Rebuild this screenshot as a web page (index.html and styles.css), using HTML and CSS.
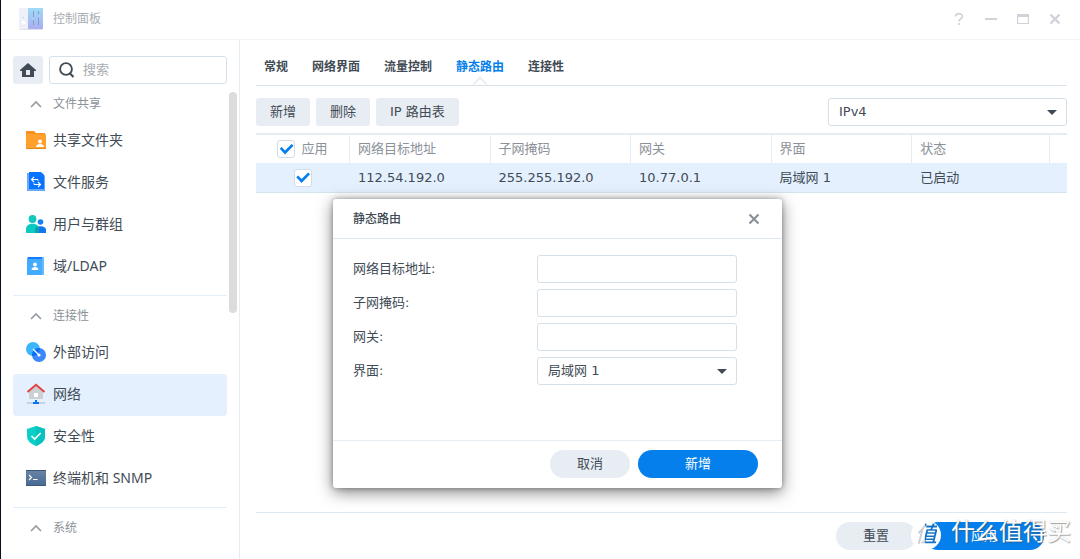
FILE: index.html
```html
<!DOCTYPE html>
<html lang="zh-CN">
<head>
<meta charset="utf-8">
<title>控制面板</title>
<link rel="stylesheet" href="styles.css">
</head>
<body>
<div class="window">
  <header class="titlebar">
    <svg class="app-icon" width="24" height="22" viewBox="0 0 24 22">
      <defs><linearGradient id="panel" x1="0" y1="0" x2="0" y2="1"><stop offset="0" stop-color="#9fdaf6"/><stop offset="1" stop-color="#a9aff0"/></linearGradient></defs>
      <rect x="0" y="1" width="24" height="21" rx="2" fill="#dfe0e6"/>
      <rect width="11" height="21" rx="1" fill="#eef0fa"/>
      <rect x="9" width="15" height="21" rx="1" fill="url(#panel)"/>
      <circle cx="4.500" cy="14.500" r="2.800" fill="#fff" stroke="#dcdfea" stroke-width=".6"/>
      <circle cx="4.500" cy="9.500" r=".6" fill="#b5bac8"/>
      <path d="M14.500 3v14M19.500 3v14" stroke="#7f9fca" stroke-width="1"/>
      <circle cx="14.500" cy="10.500" r="1.500" fill="#a9d0fa"/><circle cx="19.500" cy="8" r="1.500" fill="#a9d0fa"/>
    </svg>
    <h1 class="title">控制面板</h1>
    <div class="window-tools">
      <button class="tool" aria-label="帮助"><svg width="12" height="14" viewBox="0 0 12 14"><path d="M2.500 4.500C2.500 .8 9.500 .8 9.500 4.300C9.500 6.500 6 6.600 6 9.500M6 11v2" fill="none" stroke="currentColor" stroke-width="1.700"/></svg></button>
      <button class="tool" aria-label="最小化"><svg width="12" height="12" viewBox="0 0 12 12"><path d="M0 6h12" stroke="currentColor" stroke-width="2"/></svg></button>
      <button class="tool" aria-label="最大化"><svg width="12" height="12" viewBox="0 0 12 12"><path d="M.6 1.500h10.800v9H.6z" fill="none" stroke="currentColor" stroke-width="1.200"/><path d="M0 1h12v3H0z" fill="currentColor"/></svg></button>
      <button class="tool" aria-label="关闭"><svg width="12" height="12" viewBox="0 0 12 12"><path d="M1.500 1.500l9 9M10.500 1.500l-9 9" stroke="currentColor" stroke-width="2.400"/></svg></button>
    </div>
  </header>

  <nav class="sidebar">
    <div class="search-row">
      <button class="home" aria-label="主页"><svg width="16" height="14" viewBox="0 0 16 14"><path d="M8 0L0 7v1h2v6h12V8h2V7z" fill="#414b55"/><path d="M6 7h4v5H6z" fill="#e8edf3"/></svg></button>
      <label class="search">
        <svg width="16" height="16" viewBox="0 0 16 16"><circle cx="7" cy="7" r="5.900" fill="none" stroke="#414b55" stroke-width="1.900"/><path d="M10.500 11l4 4" stroke="#414b55" stroke-width="2.200"/></svg>
        <input type="search" placeholder="搜索" aria-label="搜索">
      </label>
    </div>

    <section class="group">
      <h2 class="group-title"><svg width="12" height="8" viewBox="0 0 12 8"><path d="M1 7l5-5 5 5" fill="none" stroke="#969da5" stroke-width="1.700"/></svg>文件共享</h2>
      <a class="item" href="#"><svg width="20" height="20" viewBox="0 0 20 20"><path d="M0 1h8l2 2h9v5H0z" fill="#f6901e"/><rect y="4" width="20" height="15" rx="1" fill="#ffa02c"/><path d="M0 18h20v1H0z" fill="#e98a18"/><circle cx="14" cy="11.500" r="2" fill="#fff"/><path d="M10 17c0-4 8-4 8 0z" fill="#fff"/></svg>共享文件夹</a>
      <a class="item" href="#"><svg width="20" height="20" viewBox="0 0 20 20"><path d="M1 1h15l3 3v15H1z" fill="#69a9fa"/><path d="M3 0h12l3 3v14H3z" fill="#0874ff"/><path d="M12 7.500H5.500M8 5L5.500 7.500 8 10M8 12.500h6.500M12 10l2.500 2.500L12 15M12 7.500v1.200M8 12.500v-1.200" fill="none" stroke="#fff" stroke-width="1.100"/></svg>文件服务</a>
      <a class="item" href="#"><svg width="20" height="20" viewBox="0 0 20 20"><circle cx="6.500" cy="5" r="3.900" fill="#12c8bd"/><circle cx="14.500" cy="8" r="2.800" fill="#1681f5"/><path d="M9 19v-3c0-5 11-5 11 0v3z" fill="#1276ef"/><path d="M0 19v-4c0-7 13-7 13 0v4z" fill="#0ccac2"/><path d="M9 19v-4c0-1 1-2 3-3 1 2 1 3 1 7z" fill="#08a4ae"/></svg>用户与群组</a>
      <a class="item" href="#"><svg width="20" height="20" viewBox="0 0 20 20"><rect x="1" y="1" width="17" height="18" rx="1" fill="#65b8ff"/><path d="M2 1h14v2H2z" fill="#177cff"/><path d="M1 3h15v16H1z" fill="#43acff"/><circle cx="9" cy="8.500" r="1.900" fill="#fff"/><path d="M5.500 14c0-4 7-4 7 0z" fill="#fff"/></svg>域/LDAP</a>
    </section>

    <section class="group">
      <h2 class="group-title"><svg width="12" height="8" viewBox="0 0 12 8"><path d="M1 7l5-5 5 5" fill="none" stroke="#969da5" stroke-width="1.700"/></svg>连接性</h2>
      <a class="item" href="#"><svg width="20" height="20" viewBox="0 0 20 20"><circle cx="7" cy="7" r="7" fill="#3fb5fb"/><circle cx="13" cy="13" r="7" fill="#3b88fb"/><path d="M6.050 13.900A7 7 0 0 1 13.900 6.050A7 7 0 0 1 6.050 13.900z" fill="#0870f5"/><path d="M7 7l5 5" stroke="#fff" stroke-width="1.200"/><circle cx="13" cy="13" r="1.600" fill="#fff"/></svg>外部访问</a>
      <a class="item selected" href="#" aria-current="page"><svg width="20" height="22" viewBox="0 0 20 22"><path d="M3 8l7-6 7 6v8H3z" fill="#cdd0d3"/><path d="M1.500 9L10 1.800 18.500 9" fill="none" stroke="#e14444" stroke-width="2"/><rect x="8" y="10" width="4" height="4" fill="#fff"/><path d="M1 20h6M13 20h6" stroke="#bfc7ce" stroke-width="1.500"/><path d="M7 19h2v-2h2v2h2v2H7z" fill="#0874f5"/></svg>网络</a>
      <a class="item" href="#"><svg width="20" height="20" viewBox="0 0 20 20"><path d="M10 0l9 3v7c0 5-4 8-9 10-5-2-9-5-9-10V3z" fill="#0bcfc7"/><path d="M10 0l9 3v7c0 5-4 8-9 10z" fill="#08c2c0"/><path d="M5.500 10l3.200 3 6-6" fill="none" stroke="#fff" stroke-width="1.700"/></svg>安全性</a>
      <a class="item" href="#"><svg width="20" height="16" viewBox="0 0 20 16"><defs><linearGradient id="term" x1="0" y1="0" x2="0" y2="1"><stop offset="0" stop-color="#6783a3"/><stop offset="1" stop-color="#486b94"/></linearGradient></defs><rect width="20" height="16" fill="#3c5878"/><rect width="20" height="14" y="1" fill="url(#term)"/><path d="M3 5l2.500 2.500L3 10M7 9.500h4.500" fill="none" stroke="#fff" stroke-width="1.200"/></svg>终端机和 SNMP</a>
    </section>

    <section class="group">
      <h2 class="group-title"><svg width="12" height="8" viewBox="0 0 12 8"><path d="M1 7l5-5 5 5" fill="none" stroke="#969da5" stroke-width="1.700"/></svg>系统</h2>
    </section>
    <div class="scrollbar"></div>
  </nav>

  <main class="content">
    <nav class="tabs">
      <a class="tab" href="#">常规</a>
      <a class="tab" href="#">网络界面</a>
      <a class="tab" href="#">流量控制</a>
      <a class="tab active" href="#" aria-current="page">静态路由</a>
      <a class="tab" href="#">连接性</a>
    </nav>
    <div class="toolbar">
      <button class="btn">新增</button>
      <button class="btn">删除</button>
      <button class="btn">IP 路由表</button>
      <div class="select-box version"><select aria-label="IP 版本"><option>IPv4</option></select></div>
    </div>
    <table class="routes">
      <colgroup><col class="col-apply"><col class="col-data"><col class="col-data"><col class="col-data"><col class="col-data"><col class="col-state"><col></colgroup>
      <thead>
        <tr><th><label class="apply"><input class="check" type="checkbox" checked>应用</label></th><th>网络目标地址</th><th>子网掩码</th><th>网关</th><th>界面</th><th>状态</th><th></th></tr>
      </thead>
      <tbody>
        <tr><td><label class="apply"><input class="check" type="checkbox" checked aria-label="应用此路由"></label></td><td>112.54.192.0</td><td>255.255.192.0</td><td>10.77.0.1</td><td>局域网 1</td><td>已启动</td><td></td></tr>
      </tbody>
    </table>
    <footer class="actions">
      <button class="pill">重置</button>
      <button class="pill primary">应用</button>
    </footer>
  </main>

  <form class="dialog" role="dialog" aria-labelledby="dialog-title">
    <header class="dialog-head">
      <h2 id="dialog-title">静态路由</h2>
      <button type="button" class="close" aria-label="关闭"><svg width="12" height="12" viewBox="0 0 12 12"><path d="M1.500 1.500l9 9M10.500 1.500l-9 9" stroke="currentColor" stroke-width="2.200"/></svg></button>
    </header>
    <div class="fields">
      <label for="dest">网络目标地址:</label><input id="dest" type="text">
      <label for="mask">子网掩码:</label><input id="mask" type="text">
      <label for="gateway">网关:</label><input id="gateway" type="text">
      <label for="iface">界面:</label><div class="select-box"><select id="iface"><option>局域网 1</option></select></div>
    </div>
    <footer class="dialog-foot">
      <button type="button" class="pill">取消</button>
      <button type="button" class="pill primary">新增</button>
    </footer>
  </form>

  <div class="watermark"><span class="badge"><span class="badge-char">值</span></span><span class="brand">什么值得买</span></div>
</div>
</body>
</html>
```
FILE: styles.css
```css
* { box-sizing: border-box; }
body {
  margin: 0;
  font: 13px/20px "DejaVu Sans", "Noto Sans CJK SC", sans-serif;
  color: #414b55;
  background: #fff;
}
button, input, select { font: inherit; color: inherit; }
button { border: 0; padding: 0; cursor: pointer; }
a { color: inherit; text-decoration: none; }
h1, h2 { margin: 0; }
svg { display: block; flex: none; }

.window {
  position: relative;
  height: 100vh;
  display: grid;
  grid-template: 40px minmax(0, 1fr) / 239px minmax(0, 1fr);
  border-left: 1px solid #06101f;
  overflow: hidden;
}

.titlebar {
  grid-column: 1 / -1;
  display: flex;
  align-items: center;
  padding: 0 19px 2px 18px;
  border-bottom: 1px solid #f1f3f5;
}
.title { margin-left: 10px; font-size: 12px; font-weight: 400; color: #a9adb2; }
.window-tools { margin-left: auto; display: flex; gap: 20px; color: #d0d3d9; }
.tool { display: flex; background: none; color: inherit; align-items: center; }

.sidebar {
  position: relative;
  padding: 16px 12px 0;
  border-right: 1px solid #e8ecf1;
  overflow: hidden;
}
.search-row { display: flex; gap: 6px; }
.home {
  width: 30px;
  height: 28px;
  display: grid;
  place-items: center;
  border-radius: 3px;
  background: #e8edf3;
}
.search {
  flex: 1;
  display: flex;
  align-items: center;
  gap: 8px;
  height: 28px;
  padding: 0 9px;
  border: 1px solid #d5e0ea;
  border-radius: 3px;
}
.search input { width: 100%; min-width: 0; border: 0; padding: 0; outline: 0; background: none; }
.search input::placeholder { color: #a8adb3; }

.group + .group { margin-top: 7px; border-top: 1px solid #e5edf5; }
.group-title {
  display: flex;
  align-items: center;
  gap: 11px;
  height: 36px;
  padding: 3px 0 0 17px;
  font-size: 12px;
  font-weight: 400;
  color: #8b9198;
}
.item {
  display: flex;
  align-items: center;
  gap: 7px;
  height: 42px;
  padding: 0 0 2px 13px;
  border-radius: 4px;
  font-family: "Noto Sans", "Noto Sans CJK SC", sans-serif;
  font-size: 14px;
}
.selected { background: #e4f0fd; }
.scrollbar {
  position: absolute;
  top: 52px;
  right: 2px;
  width: 8px;
  height: 221px;
  border-radius: 4px;
  background: #dcdcdc;
}

.content {
  display: flex;
  flex-direction: column;
  min-width: 0;
  padding: 0 13px 9px 16px;
}
.tabs {
  display: flex;
  gap: 24px;
  height: 46px;
  padding: 7px 8px 0;
  border-bottom: 1px solid #d9e3ed;
  font-size: 12px;
  font-weight: 700;
}
.tab { position: relative; line-height: 40px; }
.active { color: #057feb; }
.active::after {
  content: "";
  position: absolute;
  left: 50%;
  bottom: -4px;
  width: 9px;
  height: 9px;
  margin-left: -5px;
  border: solid #d9e3ed;
  border-width: 1px 0 0 1px;
  background: linear-gradient(135deg, #fff 50%, transparent 50%);
  transform: rotate(45deg);
}
.toolbar { display: flex; gap: 6px; padding: 12px 0 7px; }
.btn { height: 28px; padding: 0 14px; border-radius: 3px; background: #e8edf3; }

.select-box { position: relative; }
.select-box::after {
  content: "";
  position: absolute;
  top: 12px;
  right: 10px;
  border: 5px solid transparent;
  border-top-color: #414b55;
  border-bottom: 0;
  pointer-events: none;
}
.select-box select, .fields input {
  display: block;
  width: 100%;
  height: 28px;
  padding: 0 10px;
  border: 1px solid #d5e0ea;
  border-radius: 3px;
  background: #fff;
  appearance: none;
}
.version { width: 239px; margin-left: auto; }

.routes {
  width: 100%;
  table-layout: fixed;
  border-collapse: separate;
  border-spacing: 0;
  border-top: 2px solid #e5ecf3;
}
.col-apply { width: 94px; }
.col-data { width: 17.33%; }
.col-state { width: 17%; }
.routes th, .routes td { height: 30px; padding: 0 8px; text-align: left; white-space: nowrap; }
.routes th { height: 28px; font-weight: 400; color: #8b9198; border-right: 1px solid #e5ecf3; }
.routes th:last-child { border-right: 0; }
.routes td { background: #e4f0fd; border-bottom: 1px solid #d3e4f1; }
.apply { display: flex; align-items: center; justify-content: center; gap: 6px; }
.check {
  position: relative;
  width: 18px;
  height: 18px;
  margin: 0;
  border: 1px solid #d0dce8;
  border-radius: 3px;
  background: #fff;
  appearance: none;
}
.check:checked::after {
  content: "";
  position: absolute;
  inset: 0;
  background: #057feb;
  clip-path: polygon(8% 48%, 20% 38%, 41% 59%, 82% 18%, 94% 30%, 41% 84%);
}

.actions {
  display: flex;
  justify-content: flex-end;
  gap: 8px;
  margin-top: auto;
  padding: 9px 23px 0;
  border-top: 1px solid #dfe8f0;
}
.pill { min-width: 80px; height: 28px; border-radius: 14px; background: #e8edf3; }
.primary { min-width: 120px; background: #057feb; color: #fff; }

.dialog {
  position: absolute;
  left: 332px;
  top: 199px;
  width: 449px;
  border-radius: 3px;
  background: #fff;
  box-shadow: 0 4px 16px rgba(0, 0, 0, .5), 0 0 5px rgba(0, 0, 0, .3);
}
.dialog-head {
  display: flex;
  align-items: center;
  justify-content: space-between;
  height: 40px;
  padding: 0 22px 0 20px;
  border-bottom: 1px solid #dfe8f0;
}
.dialog-head h2 { font-size: 12px; font-weight: 500; }
.close { background: none; color: #8b9299; }
.fields {
  display: grid;
  grid-template-columns: 184px 200px;
  gap: 6px 0;
  align-items: center;
  padding: 16px 20px 55px;
}
.dialog-foot {
  display: flex;
  justify-content: flex-end;
  gap: 8px;
  padding: 9px 24px 10px;
  border-top: 1px solid #e5edf3;
}

.watermark {
  position: absolute;
  right: 9px;
  bottom: 9px;
  display: flex;
  align-items: flex-start;
  gap: 10px;
  pointer-events: none;
}
.badge {
  display: grid;
  place-items: center;
  width: 30px;
  height: 30px;
  border-radius: 50%;
  background: #fff;
}
.badge-char {
  font-size: 22px;
  line-height: 28px;
  font-weight: 500;
  font-style: italic;
  color: transparent;
  background: linear-gradient(90deg, #c9ccd0 45%, #1272c8 45%);
  background-clip: text;
}
.brand {
  font-size: 24px;
  line-height: 24px;
  font-weight: 400;
  color: #fff;
  text-shadow: 1px 1px 1px rgba(70, 75, 80, .5), 0 0 1px rgba(100, 105, 110, .4);
}
```
